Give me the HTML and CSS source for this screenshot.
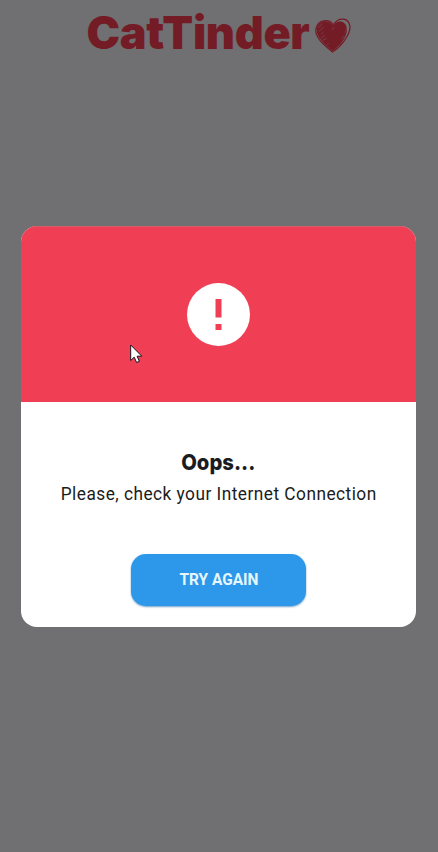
FILE: index.html
```html
<!DOCTYPE html>
<html lang="en">
<head>
<meta charset="utf-8">
<title>CatTinder</title>
<link rel="stylesheet" href="styles.css">
</head>
<body>
<header class="brand">
  <span class="brand-name">CatTinder</span>
  <svg class="heart" viewBox="0 0 38 38" aria-hidden="true">
    <path class="heart-fill" d="M20 9C15 2 6 3 3 11c-2 9 9 18 16 24 7-5 15-14 15-23C33 4 24 2 20 9Z"/>
    <path class="heart-line" d="M20 8C15 1 4 3 2 12c-2 9 10 18 17 24C27 31 37 19 37 10 36 1 26-1 20 8Z"/>
    <path class="heart-scratch" d="M5 11l3-4M5 15l5-5M7 18l3-3M31 6c3 2 3 6 1 10M7 22l4-3M9 24l4-2M13 29l2-2M18 13l3-2M28 23l3-4"/>
  </svg>
</header>
<main class="overlay">
  <section class="dialog" role="alertdialog">
    <div class="banner">
      <svg class="alert" viewBox="0 0 64 64" aria-hidden="true">
        <circle cx="31.5" cy="31.5" r="31.5"/>
        <path d="M28.500 16h6v18.500h-6zM28.500 41h6v6h-6z"/>
      </svg>
    </div>
    <div class="content">
      <h1 class="title"><span>Oops...</span></h1>
      <p class="message"><span>Please, check your Internet Connection</span></p>
      <button class="retry"><span>TRY AGAIN</span></button>
    </div>
  </section>
</main>
<svg class="cursor" viewBox="0 0 13 20" aria-hidden="true">
  <path d="M.7 1v15.500l3.500-3.300 2.400 5.300 2.800-1.200-2.300-5.100h4.700Z"/>
</svg>
</body>
</html>
```
FILE: styles.css
```css
* { box-sizing: border-box; }
body {
  margin: 0;
  height: 852px;
  overflow: hidden;
  background: #707072;
  font-family: Roboto, "Liberation Sans", sans-serif;
  color: #1b1c20;
}
.brand {
  display: flex;
  justify-content: center;
  align-items: center;
  gap: 4px;
  height: 66px;
  padding-right: 1px;
  color: #741c26;
}
.brand-name {
  font: 900 45px/66px Inter, sans-serif;
  letter-spacing: -.35px;
}
.heart { width: 37px; height: 37px; margin-top: 5px; }
.heart-fill { fill: #741c26; }
.heart-line { fill: none; stroke: #741c26; stroke-width: 1.3; }
.heart-scratch { fill: none; stroke: #77565b; stroke-width: .6; }
.overlay { padding: 160px 22px 0 21px; }
.dialog {
  height: 400.5px;
  border-radius: 16px;
  overflow: hidden;
  background: #fff;
}
.banner {
  display: flex;
  align-items: center;
  justify-content: center;
  height: 176px;
  background: #f03e54;
  border-top: 1px solid #d85c6b;
}
.alert { width: 64px; height: 64px; }
.alert circle { fill: #fff; }
.alert path { fill: #f03e54; }
.content {
  display: flex;
  flex-direction: column;
  align-items: center;
  padding-top: 45px;
}
.title, .message { margin: 0; white-space: nowrap; }
.title { font: 800 22px/30px Inter, sans-serif; }
.message { font-size: 18px; line-height: 34px; letter-spacing: .5px; }
.retry {
  width: 175px;
  height: 52px;
  margin-top: 43px;
  padding: 0;
  border: 0;
  border-radius: 15px;
  background: #2d98ea;
  box-shadow: 0 1px 2px #6e9fc8;
  color: #e4f7fd;
  font: 700 16px/52px Roboto, sans-serif;
}
.title span, .message span, .retry span { display: inline-block; }
.title span { transform: scaleX(.92); }
.message span { transform: scaleX(.959); }
.retry span { transform: scaleX(.965); }
.cursor {
  position: absolute;
  left: 130px;
  top: 344px;
  width: 13px;
  height: 20px;
}
.cursor path { fill: #fff; stroke: #17121c; stroke-width: 1; }
```
